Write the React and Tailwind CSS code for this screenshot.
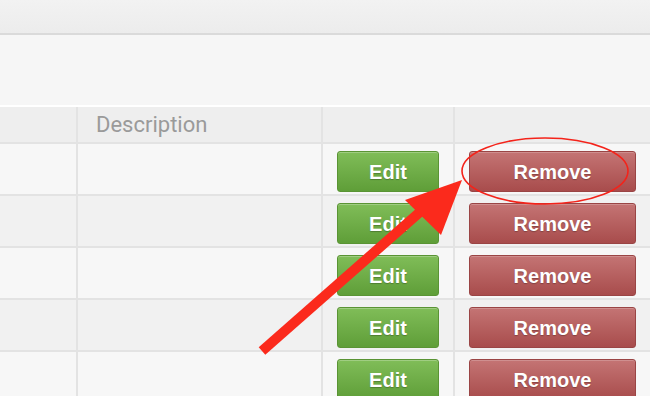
import React from 'react';

const rows = [0, 1, 2, 3, 4];

const App = () => {
  return (
    <div className="relative w-[650px] h-[396px] overflow-hidden bg-[#f6f6f6] font-['Liberation_Sans',Arial,sans-serif]">
      {/* top toolbar */}
      <div className="h-[35px] bg-gradient-to-b from-[#f2f2f2] to-[#ececec] border-b-2 border-[#dadada]" />
      <div className="h-[72px] bg-[#f6f6f6] border-b-2 border-white" />

      {/* table */}
      <div>
        <div className="flex h-[37px] bg-[#eeeeee] border-b-2 border-[#e3e3e3]">
          <div className="w-[78px] border-r-2 border-[#e3e3e3]" />
          <div className="w-[245px] border-r-2 border-[#e3e3e3] pl-[18px] flex items-center text-[22px] text-[#9a9a9a] font-['Roboto',sans-serif]">
            Description
          </div>
          <div className="w-[132px] border-r-2 border-[#e3e3e3]" />
          <div className="flex-1" />
        </div>

        {rows.map((r) => (
          <div
            key={r}
            className={`flex h-[52px] border-b-2 border-[#e3e3e3] ${r % 2 === 1 ? 'bg-[#f1f1f1]' : 'bg-[#f7f7f7]'}`}
          >
            <div className="w-[78px] border-r-2 border-[#e3e3e3]" />
            <div className="w-[245px] border-r-2 border-[#e3e3e3]" />
            <div className="w-[132px] border-r-2 border-[#e3e3e3] pl-[14px] pt-[7px]">
              <button className="w-[102px] h-[41px] rounded-[3px] border border-[#5a9434] bg-gradient-to-b from-[#80bd58] to-[#5f9e38] text-white font-bold text-[20px] [text-shadow:0_1px_1px_rgba(0,0,0,0.25)] shadow-[inset_0_1px_0_rgba(255,255,255,0.25)]">
                Edit
              </button>
            </div>
            <div className="flex-1 pl-[14px] pt-[7px]">
              <button className="w-[167px] h-[41px] rounded-[3px] border border-[#9a4545] bg-gradient-to-b from-[#c47474] to-[#a84c4c] text-white font-bold text-[20px] [text-shadow:0_1px_1px_rgba(0,0,0,0.25)] shadow-[inset_0_1px_0_rgba(255,255,255,0.2)]">
                Remove
              </button>
            </div>
          </div>
        ))}
      </div>

      {/* annotation overlay */}
      <svg className="absolute inset-0 pointer-events-none" width="650" height="396" viewBox="0 0 650 396">
        <ellipse cx="545" cy="171" rx="83" ry="33" fill="none" stroke="#f4231a" strokeWidth="1.6" />
        <line x1="262" y1="351" x2="420" y2="212" stroke="#fb2a1c" strokeWidth="10" />
        <polygon points="462,180 405,200 441,235" fill="#fb2a1c" />
      </svg>
    </div>
  );
};

export default App;
